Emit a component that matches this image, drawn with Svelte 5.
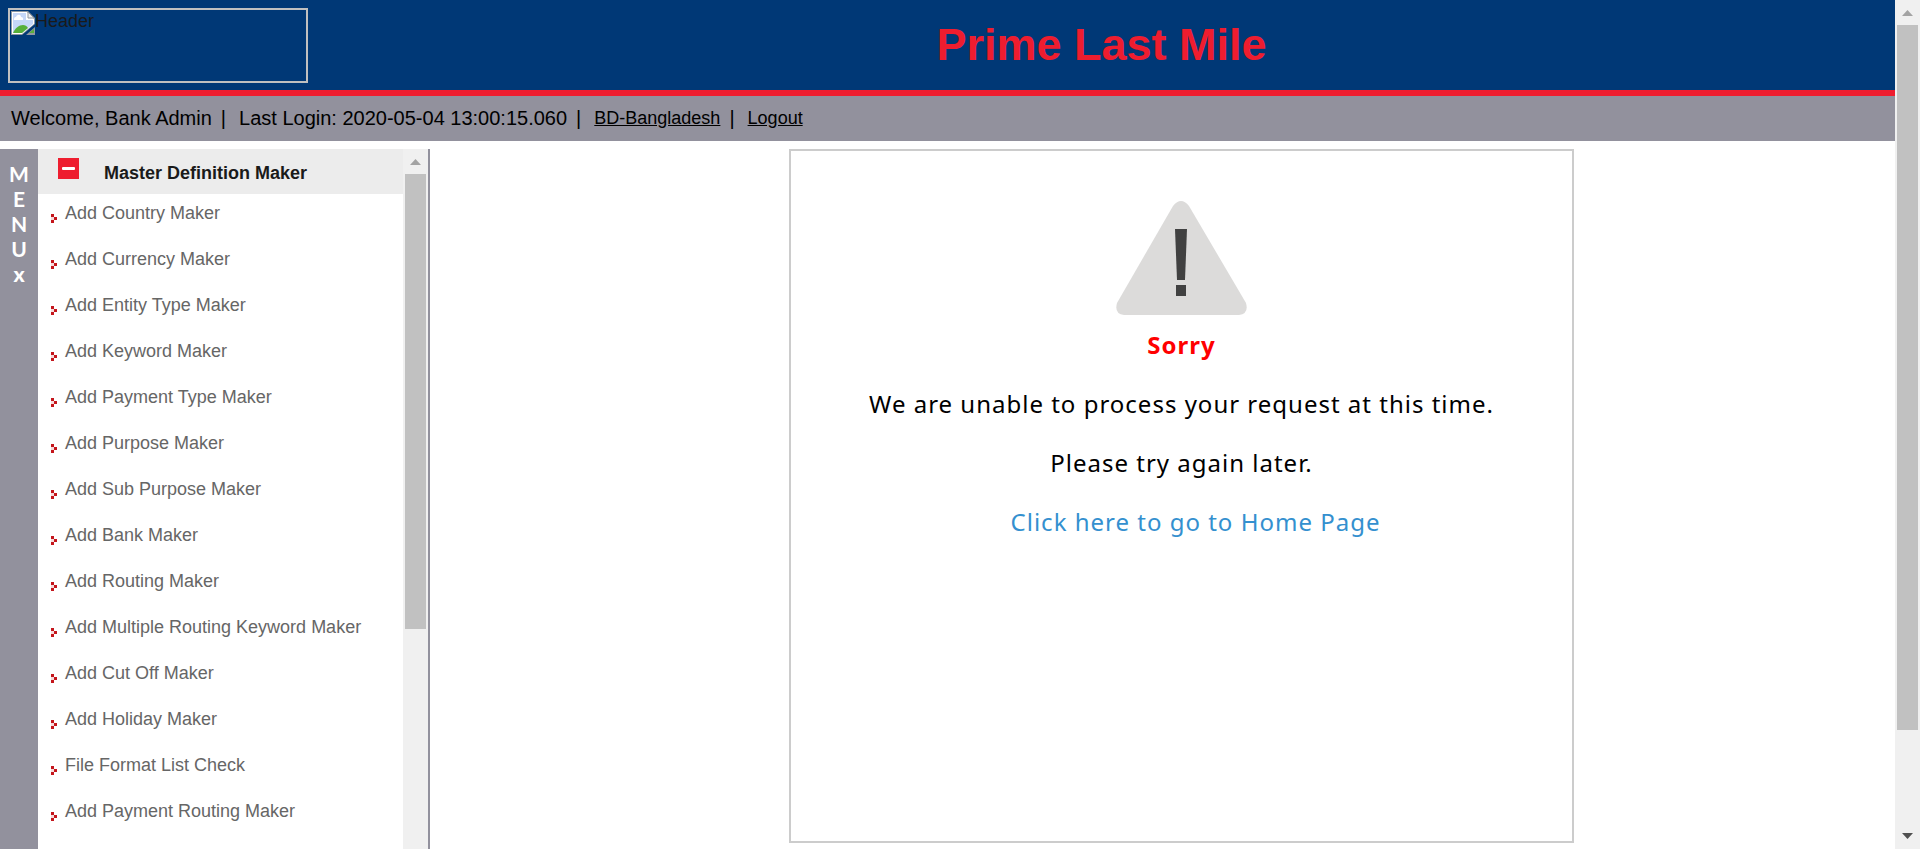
<script>
  const items = [
    'Add Country Maker', 'Add Currency Maker', 'Add Entity Type Maker', 'Add Keyword Maker',
    'Add Payment Type Maker', 'Add Purpose Maker', 'Add Sub Purpose Maker', 'Add Bank Maker',
    'Add Routing Maker', 'Add Multiple Routing Keyword Maker', 'Add Cut Off Maker',
    'Add Holiday Maker', 'File Format List Check', 'Add Payment Routing Maker'
  ];
</script>

<div class="window">
  <div class="page">
    <header>
      <div class="logo">
        <svg width="24" height="24" viewBox="0 0 24 24" aria-hidden="true">
          <path d="M0 0H17L24 7V13L11 24H0Z" fill="#8f979f" />
          <path d="M1 1H16L23 8V13L11 23H1Z" fill="#fff" />
          <path d="M2 2H15V9H22V13L11 22H2Z" fill="#c6d8f8" />
          <path d="M3 8C3 6 5 6 5 6C6 3 10 3 10 6C13 6 12 9 12 9H3Z" fill="#fff" />
          <path d="M2 22C4 17 8 14 12 14C14 14 16 15 17 17L11 22Z" fill="#57b03a" />
          <path d="M17 1V7H23Z" fill="#eee" stroke="#8f979f" />
          <path d="M15 24L24 16V24Z" fill="#8f979f" />
          <path d="M18 22L23 18V22Z" fill="#57b03a" />
        </svg><span>Header</span>
      </div>
      <h1>Prime Last Mile</h1>
    </header>

    <nav class="status" aria-label="Session">
      <span>Welcome, Bank Admin</span>
      <span class="bar">|</span>
      <span>Last Login: 2020-05-04 13:00:15.060</span>
      <span class="bar">|</span>
      <a href="#country">BD-Bangladesh</a>
      <span class="bar">|</span>
      <a href="#logout">Logout</a>
    </nav>

    <div class="body">
      <button class="rail" aria-label="Close menu">
        <span>M</span><span>E</span><span>N</span><span>U</span><b>x</b>
      </button>
      <aside>
        <div class="menu">
          <button class="group">
            <svg width="21" height="21" viewBox="0 0 21 21" aria-hidden="true">
              <rect width="21" height="21" fill="#ee1d2f" />
              <rect x="4" y="9" width="13" height="3" rx="1" fill="#fff" />
            </svg>
            <span>Master Definition Maker</span>
          </button>
          <ul>
            {#each items as item}
              <li>
                <svg width="6" height="9" viewBox="0 0 6 9" aria-hidden="true">
                  <path d="M0 0H3V3H0ZM3 3H6V6H3ZM0 6H3V9H0Z" fill="#c4161c" />
                  <path d="M0 3H3V6H0Z" fill="#f6dada" />
                </svg>
                <a href="#menu">{item}</a>
              </li>
            {/each}
          </ul>
        </div>
        <div class="scroll">
          <svg width="11" height="6" viewBox="0 0 11 6" aria-hidden="true"><path d="M0 6L5.500 0L11 6Z" fill="#a3a3a3" /></svg>
          <div class="thumb side"></div>
        </div>
      </aside>
      <main>
        <section>
          <svg class="warn" width="132" height="116" viewBox="0 0 132 116" aria-hidden="true">
            <path d="M57 6Q65 -4 73 6L130 103Q133 114 123 115H8Q-2 114 1 103Z" fill="#dcdbda" />
            <path d="M59 29H71L69 80H61Z" fill="#414141" />
            <rect x="60" y="85" width="10" height="11" fill="#414141" />
          </svg>
          <h2>Sorry</h2>
          <p>We are unable to process your request at this time.</p>
          <p>Please try again later.</p>
          <p class="home"><a href="#home">Click here to go to Home Page</a></p>
        </section>
      </main>
    </div>
  </div>
  <div class="scroll">
    <svg width="11" height="6" viewBox="0 0 11 6" aria-hidden="true"><path d="M0 6L5.500 0L11 6Z" fill="#a3a3a3" /></svg>
    <div class="thumb main"></div>
    <svg class="down" width="11" height="6" viewBox="0 0 11 6" aria-hidden="true"><path d="M0 0H11L5.500 6Z" fill="#505050" /></svg>
  </div>
</div>

<style>
  :global(body) { margin: 0; background: #fff; }
  * { box-sizing: border-box; }
  .window { display: flex; height: 100vh; overflow: hidden; font-family: "Liberation Sans", Arial, sans-serif; }
  .page { flex: 1; min-width: 0; display: flex; flex-direction: column; }
  button { border: 0; margin: 0; padding: 0; font: inherit; cursor: pointer; }
  header { display: grid; grid-template-columns: 308px 1fr; align-items: start; flex: none; height: 96px; background: #003876; border-bottom: 6px solid #ee1d2f; }
  .logo { display: flex; margin: 8px 0 0 8px; padding: 1px; width: 300px; height: 75px; border: 2px solid #c0c0c0; font-size: 18px; line-height: 20px; color: #1a1a1a; }
  h1 { margin: 19px 0 0; text-align: center; font-size: 45px; line-height: 52px; color: #ee1d2f; }
  .status { display: flex; align-items: center; gap: 9px; flex: none; height: 45px; padding-left: 11px; background: #92919d; font-size: 20px; color: #000; }
  .bar + * { margin-left: 4px; }
  .status a { font-size: 18px; color: #000; }
  .body { display: flex; flex: 1; min-height: 0; margin-top: 8px; }
  .rail { display: flex; flex-direction: column; align-items: center; flex: none; width: 38px; padding-top: 12px; background: #92919d; color: #fff; font-family: Lato, sans-serif; font-size: 21px; font-weight: 700; line-height: 25px; }
  .rail b { font-weight: 900; }
  aside { display: flex; flex: none; width: 392px; border-right: 2px solid #92919d; }
  .menu { flex: 1; overflow: hidden; }
  .group { display: flex; align-items: flex-start; gap: 25px; width: 100%; height: 45px; padding: 9px 20px; background: #ececec; color: #1a1a1a; font-size: 18px; font-weight: bold; line-height: 30px; text-align: left; }
  ul { margin: 0; padding: 0; list-style: none; }
  li { display: flex; align-items: flex-start; gap: 8px; height: 46px; padding: 8px 13px; font-size: 18px; line-height: 22px; }
  li svg { margin-top: 12px; }
  li a { color: #666; text-decoration: none; white-space: nowrap; }
  .scroll { display: flex; flex-direction: column; align-items: center; flex: none; width: 25px; padding-top: 10px; background: #f0f0f0; }
  .scroll svg { flex: none; }
  .thumb { flex: none; width: 21px; margin-top: 9px; background: #c1c1c1; }
  .side { height: 66%; }
  .main { height: 84%; }
  .down { margin: auto 0 10px; }
  main { flex: 1; display: flex; justify-content: center; padding: 0 0 6px 38px; }
  section { display: flex; flex-direction: column; align-items: center; width: 55%; border: 2px solid #ccc; padding-top: 49px; font-family: "Noto Sans", sans-serif; font-size: 24px; line-height: 35px; letter-spacing: 1px; color: #000; }
  h2 { margin: 11px 0 0; font-size: 24px; line-height: 35px; color: #f00; }
  p { margin: 24px 0 0; }
  .home { padding-left: 28px; }
  .home a { color: #3490cf; text-decoration: none; }
</style>
